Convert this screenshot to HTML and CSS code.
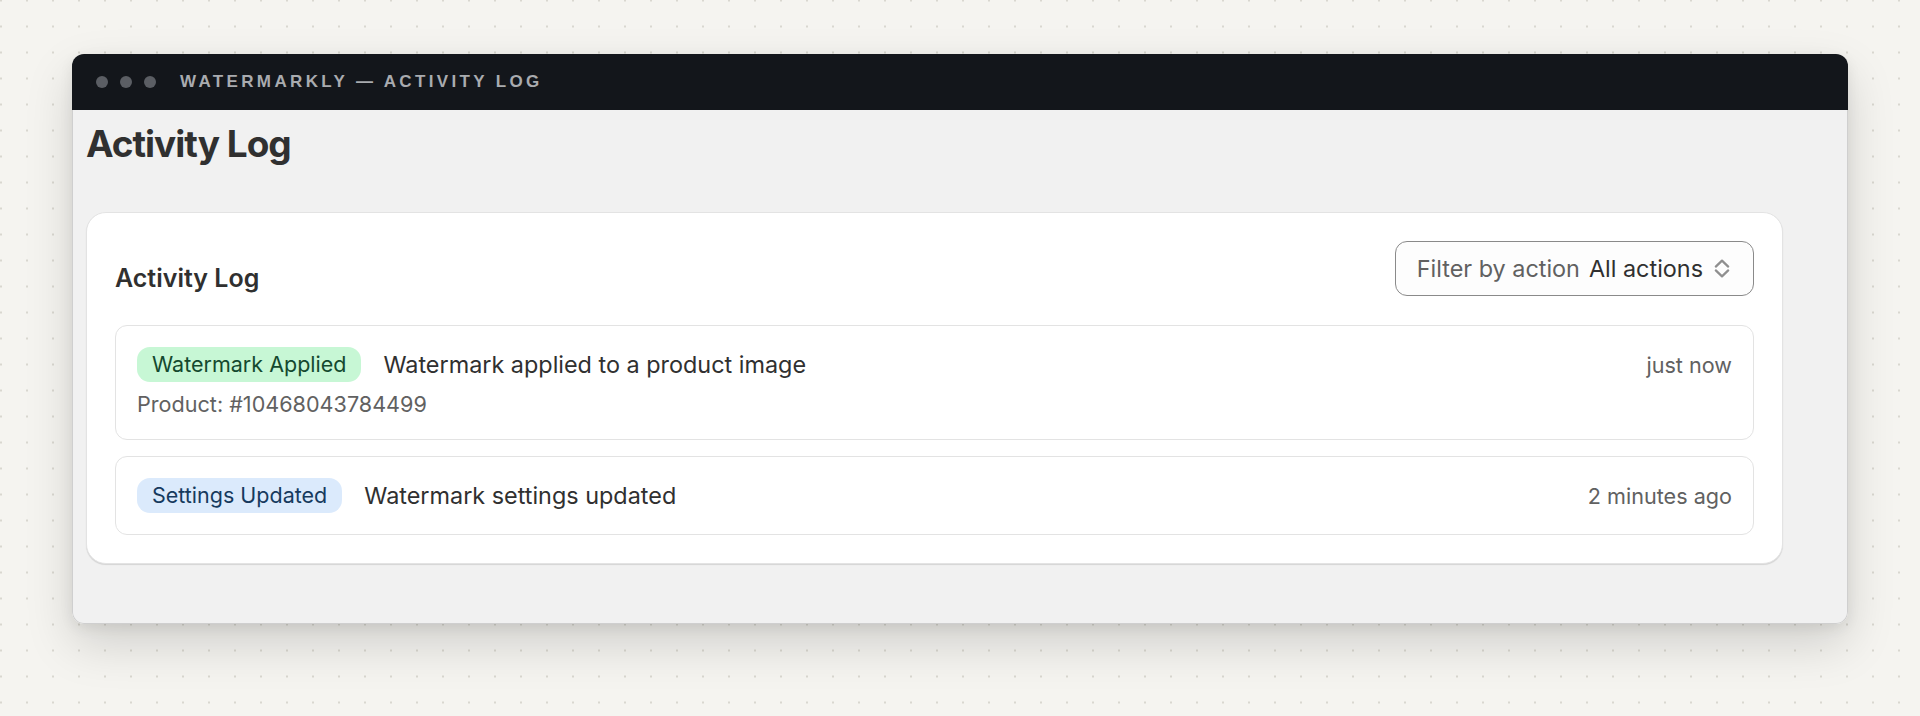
FILE: index.html
```html
<!DOCTYPE html>
<html lang="en">
<head>
    <meta charset="UTF-8">
    <meta name="viewport" content="width=device-width, initial-scale=1.0">
    <title>Watermarkly — Activity Log</title>
    <link rel="stylesheet" href="styles.css">
</head>
<body>
    <div class="window">
        <!-- title bar -->
        <div class="titlebar">
            <div class="dots">
                <span class="dot"></span>
                <span class="dot"></span>
                <span class="dot"></span>
            </div>
            <span class="window-title">Watermarkly — Activity Log</span>
        </div>

        <div class="page">
            <h1 class="page-title">Activity Log</h1>

            <section class="card">
                <div class="card-header">
                    <h2 class="card-title">Activity Log</h2>
                    <label class="select">
                        <span class="select-label">Filter by action</span>
                        <span class="select-value">All actions</span>
                        <svg class="select-icon" width="16" height="21" viewBox="0 0 16 21" fill="none" stroke="#8f8f8f" stroke-width="2.2" stroke-linecap="round" stroke-linejoin="round">
                            <path d="M1.8 8.6 L8 2.6 L14.2 8.6"/>
                            <path d="M1.8 12.4 L8 18.4 L14.2 12.4"/>
                        </svg>
                    </label>
                </div>

                <ul class="log-list">
                    <li class="log-item">
                        <div class="log-row">
                            <span class="badge badge-success">Watermark Applied</span>
                            <span class="log-text">Watermark applied to a product image</span>
                            <span class="log-time">just now</span>
                        </div>
                        <div class="log-meta">Product: #10468043784499</div>
                    </li>
                    <li class="log-item">
                        <div class="log-row">
                            <span class="badge badge-info">Settings Updated</span>
                            <span class="log-text">Watermark settings updated</span>
                            <span class="log-time">2 minutes ago</span>
                        </div>
                    </li>
                </ul>
            </section>
        </div>
    </div>
</body>
</html>
```

FILE: styles.css
```css
* { box-sizing: border-box; }

body {
    margin: 0;
    padding: 54px 72px 0;
    height: 716px;
    overflow: hidden;
    font-family: Inter, "Noto Sans", sans-serif;
    color: #303030;
    background-color: #f5f4f0;
    background-image: radial-gradient(circle, #d9d7d0 1px, transparent 1.3px);
    background-size: 26px 26px;
    background-position: -12px -12.5px;
}

.window {
    border-radius: 12px;
    overflow: hidden;
    box-shadow: 0 20px 48px rgba(0, 0, 0, 0.15), 0 4px 14px rgba(0, 0, 0, 0.07);
}

.titlebar {
    height: 56px;
    background: #13161b;
    display: flex;
    align-items: center;
    padding: 0 24px;
}
.dots { display: flex; gap: 12px; }
.dot {
    width: 12px;
    height: 12px;
    border-radius: 50%;
    background: #5b5e64;
}
.window-title {
    margin-left: 24px;
    font-family: "Liberation Sans", Arial, sans-serif;
    font-weight: bold;
    font-size: 17px;
    letter-spacing: 3.35px;
    text-transform: uppercase;
    color: #a9abaf;
}

.page {
    background: #f1f1f1;
    border: 1px solid #cfcfcf;
    border-top: none;
    border-radius: 0 0 12px 12px;
    padding: 11px 64px 59px 13px;
}

.page-title {
    margin: 0 0 46px;
    font-size: 37px;
    font-weight: 700;
    letter-spacing: -1px;
    line-height: 45px;
    color: #303030;
}

.card {
    background: #fff;
    border: 1px solid #e3e3e3;
    border-radius: 20px;
    padding: 28px;
    box-shadow: 0 1px 1px rgba(0, 0, 0, 0.12);
}

.card-header {
    display: flex;
    justify-content: space-between;
    align-items: flex-end;
    margin-bottom: 29px;
}
.card-title {
    margin: 0 0 3px;
    font-size: 25px;
    font-weight: 600;
    line-height: 30px;
    color: #303030;
}

.select {
    display: flex;
    align-items: center;
    height: 55px;
    padding: 0 23px 0 21px;
    border: 1px solid #8a8a8a;
    border-radius: 12px;
    background: #fdfdfd;
    font-size: 23.4px;
    cursor: pointer;
}
.select-label { color: #616161; margin-right: 9px; }
.select-value { color: #303030; margin-right: 11px; }

.log-list {
    list-style: none;
    margin: 0;
    padding: 0;
    display: flex;
    flex-direction: column;
    gap: 16px;
}
.log-item {
    border: 1px solid #e3e3e3;
    border-radius: 12px;
    padding: 21px;
}
.log-row {
    display: flex;
    align-items: center;
    gap: 22px;
}
.badge {
    height: 35px;
    padding: 4px 15px 0;
    border-radius: 13px;
    font-size: 21.5px;
    line-height: 26px;
}
.badge-success { background: #c7f7d5; color: #14492e; }
.badge-info { background: #dbeafc; color: #163a5e; }

.log-text {
    flex: 1;
    font-size: 23.4px;
    line-height: 28px;
    color: #303030;
}
.log-time {
    font-size: 21.6px;
    color: #616161;
}
.log-meta {
    margin-top: 9px;
    font-size: 21.6px;
    line-height: 27px;
    color: #616161;
}
```
